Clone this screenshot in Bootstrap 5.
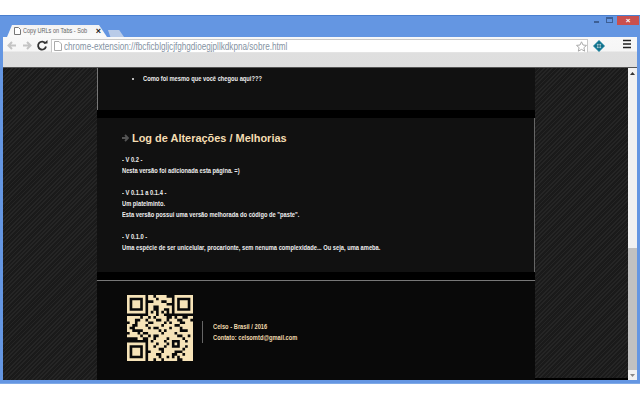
<!DOCTYPE html>
<html lang="en">
<head>
    <meta charset="UTF-8">
    <title>Copy URLs on Tabs - Sobre</title>
    <link href="https://cdn.jsdelivr.net/npm/bootstrap@5.3.0/dist/css/bootstrap.min.css" rel="stylesheet">
    <style>
        html, body { width: 640px; height: 400px; overflow: hidden; background: #fff; }
        body { font-family: "Liberation Sans", Arial, sans-serif; }
        .browser-win { margin-top: 15px; height: 369px; background: #6496e2; border-top: 1px solid #4a7fce; border-bottom: 1px solid #7fa9e6; padding: 0 3px 3px 3px; }
        .tab-strip { height: 21px; flex: none; }
        .tab-shape { width: 100px; height: 12px; margin-left: 4px; padding: 0 6px 0 7px; background: linear-gradient(#f2f2f2, #fafafa); clip-path: polygon(0 100%, 5px 0, 92px 0, 100% 100%); font-size: 7.5px; color: #666; white-space: nowrap; }
        .tab-shape svg { flex: none; }
        .tab-title { margin: 0 -20px 0 2px; flex: none; transform: scaleX(.74); transform-origin: 0 50%; }
        .tab-close { font-size: 9px; font-weight: bold; color: #222; line-height: 1; }
        .new-tab { width: 16px; height: 7px; margin-left: 1px; background: #b9cbe8; clip-path: polygon(0 0, 70% 0, 100% 100%, 15% 100%); }
        .win-btn { height: 9px; margin-right: -2px; }
        .win-close { width: 22px; height: 9px; background: #c9504f; color: #fff; font-size: 8px; font-weight: bold; line-height: 9px; text-align: center; margin-left: 3px; }
        .tool-bar { height: 31px; flex: none; background: linear-gradient(#f8f8f8 0, #f6f6f6 14px, #dfdfdf 15px, #dedede 100%); border-bottom: 1px solid #555; padding: 2px 6px 0 2px; }
        .nav-glyph { width: 14px; height: 13px; flex: none; margin-right: 1px; }
        .addr-bar { width: 537px; height: 14px; margin-left: 1px; background: #fff; border: 1px solid #c8c8c8; border-bottom-color: #e4e4e4; padding: 0 0 0 2px; flex: none; font-size: 10px; color: #8593a3; white-space: nowrap; }
        .addr-icon { margin-right: 2px; }
        .addr-text { transform: scaleX(.815); transform-origin: 0 50%; }
        .ext-icon { margin-left: 4px; }
        .page-view { height: 313px; min-height: 0; }
        .hatch-side { width: 94px; flex: none; background: repeating-linear-gradient(135deg, #252525 0, #252525 1.2px, #1a1a1a 1.2px, #1a1a1a 3px); }
        .page-col { width: 438px; flex: none; font-size: 7px; font-weight: bold; line-height: 11px; color: #efefef; }
        .hatch-right { width: 93px; flex: none; background: repeating-linear-gradient(135deg, #252525 0, #252525 1.2px, #1a1a1a 1.2px, #1a1a1a 3px); border-bottom: 2px solid #000; }
        .panel-top { height: 42px; background: #111; border-left: 1px solid #777; padding: 5px 0 0 38px; }
        .panel-top ul { margin: 0; padding-left: 7px; }
        .squeeze-text { display: inline-block; white-space: nowrap; transform: scaleX(.82); transform-origin: 0 0; }
        .black-band { height: 8px; background: #000; }
        .panel-log { height: 154px; background: #111; border-right: 1px solid #666; padding: 13px 0 0 25px; }
        .log-head { font-size: 10.95px; line-height: 14px; font-weight: bold; color: #f5deb3; margin: 0 0 9px 0; gap: 3px; }
        .log-lines p { margin: 0 0 11px 0; }
        .foot-rule { height: 1px; background: #777; flex: none; }
        .panel-foot { background: #090909; padding: 14px 0 0 30px; flex: 1; }
        .qr-code { width: 66px; height: 66px; flex: none; }
        .foot-info { margin: 26px 0 0 9px; padding-left: 10px; border-left: 1px solid #666; height: 22px; color: #f0d9ae; }
        .scroll-rail { width: 9px; flex: none; background: #f1f1f1; }
        .scroll-gap { height: 170px; }
        .scroll-thumb { flex: 1; background: #c1c1c1; }
        .scroll-end { height: 10px; flex: none; }
    </style>
</head>
<body>
<div class="browser-win d-flex flex-column">
    <div class="tab-strip d-flex align-items-end">
        <div class="tab-shape d-flex align-items-center">
            <svg width="7" height="8" viewBox="0 0 7 8"><path d="M.5.5h4l2 2v5h-6z" fill="#fff" stroke="#777"/></svg>
            <span class="tab-title">Copy URLs on Tabs - Sob</span>
            <span class="tab-close ms-auto">×</span>
        </div>
        <div class="new-tab"></div>
        <div class="win-btn ms-auto align-self-start d-flex align-items-center">
            <svg width="8" height="9" viewBox="0 0 8 9"><rect x="1" y="5" width="5" height="2" fill="#3d5f94"/></svg>
            <svg class="ms-1" width="9" height="9" viewBox="0 0 9 9"><rect x="1.500" y="1.500" width="6" height="5" fill="none" stroke="#3d5f94"/><rect x="1" y="1" width="7" height="2" fill="#3d5f94"/></svg>
            <div class="win-close">×</div>
        </div>
    </div>
    <div class="tool-bar d-flex align-items-start">
        <svg class="nav-glyph" viewBox="0 0 14 13"><path d="M11 6.500H4M7 3 3.500 6.500 7 10" fill="none" stroke="#c4c4c4" stroke-width="2"/></svg>
        <svg class="nav-glyph" viewBox="0 0 14 13"><path d="M3 6.500h7M7 3l3.500 3.500L7 10" fill="none" stroke="#c4c4c4" stroke-width="2"/></svg>
        <svg class="nav-glyph" viewBox="0 0 14 13"><path d="M10.500 4.500A4 4 0 1 0 11 7.500" fill="none" stroke="#333" stroke-width="1.800"/><path d="M8.500 4.500h4v-3.500z" fill="#333"/></svg>
        <div class="addr-bar d-flex align-items-center">
            <svg class="addr-icon" width="8" height="10" viewBox="0 0 8 10"><path d="M.5.5h4.500l2.500 2.500v6.500h-7z" fill="#fff" stroke="#aaa"/></svg>
            <span class="addr-text">chrome-extension://fbcficblgljcjfghgdioegjpllkdkpna/sobre.html</span>
            <svg class="ms-auto" width="11" height="11" viewBox="0 0 11 11"><path d="M5.500.8 7 4l3.500.4-2.600 2.300.8 3.500-3.200-1.800-3.200 1.800.8-3.500L.5 4.400 4 4z" fill="#fff" stroke="#aaa"/></svg>
        </div>
        <svg class="ext-icon" width="14" height="14" viewBox="0 0 14 14"><path d="M7 1l6 6-6 6-6-6z" fill="#1b7f9a"/><circle cx="7" cy="7" r="2.200" fill="#e8f4f6"/><path d="M7 3v8M3 7h8" stroke="#0f5f75"/></svg>
        <svg class="ms-auto" width="8" height="10" viewBox="0 0 8 10"><path d="M0 1.500h8M0 5h8M0 8.500h8" stroke="#222" stroke-width="1.500"/></svg>
    </div>
    <div class="page-view d-flex">
        <div class="hatch-side"></div>
        <div class="page-col d-flex flex-column">
            <div class="panel-top">
                <ul><li><span class="squeeze-text">Como foi mesmo que você chegou aqui???</span></li></ul>
            </div>
            <div class="black-band"></div>
            <div class="panel-log">
                <h2 class="log-head d-flex align-items-center">
                    <svg width="7" height="8" viewBox="0 0 7 8"><path d="M0 4h5M3 1l3 3-3 3" fill="none" stroke="#555" stroke-width="1.800"/></svg>
                    <span>Log de Alterações / Melhorias</span>
                </h2>
                <div class="log-lines squeeze-text">
                    <p>- V 0.2 -<br>Nesta versão foi adicionada esta página. =)</p>
                    <p>- V 0.1.1 a 0.1.4 -<br>Um platelminto.<br>Esta versão possui uma versão melhorada do código de "paste".</p>
                    <p>- V 0.1.0 -<br>Uma espécie de ser unicelular, procarionte, sem nenuma complexidade... Ou seja, uma ameba.</p>
                </div>
            </div>
            <div class="black-band"></div>
            <div class="foot-rule"></div>
            <div class="panel-foot d-flex">
                <svg class="qr-code" id="qrCode" viewBox="0 0 25 25"></svg>
                <div class="foot-info">
                    <span class="squeeze-text">Celso - Brasil / 2016<br>Contato: celsomtd@gmail.com</span>
                </div>
            </div>
        </div>
        <div class="hatch-right"></div>
        <div class="scroll-rail d-flex flex-column">
            <div class="scroll-end d-flex justify-content-center pt-1"><svg width="5" height="3" viewBox="0 0 5 3"><path d="M2.500 0 5 3H0z" fill="#333"/></svg></div>
            <div class="scroll-gap"></div>
            <div class="scroll-thumb"></div>
            <div class="scroll-end d-flex justify-content-center pt-1"><svg width="5" height="3" viewBox="0 0 5 3"><path d="M0 0h5L2.500 3z" fill="#888"/></svg></div>
        </div>
    </div>
</div>
<script>
    // QR modules, one string per row
    const qrRows = [
        '1111111011011110001111111',
        '1000001011101111101000001',
        '1011101000111001101011101',
        '1011101011111110001011101',
        '1011101011001111101011101',
        '1000001011001100101000001',
        '1111111010101010101111111',
        '0000000011101100000000000',
        '1111101101011110010110011',
        '1110011011100110111001110',
        '0110111100111101011100111',
        '1100111011111011110011111',
        '1001111101001111011101111',
        '1100001111110101111100011',
        '0111010011111011110111111',
        '1111101101001111111001101',
        '0000110011011110111110111',
        '0000000010111101100011011',
        '1111111011101110101011111',
        '1000001011011101100011011',
        '1011101011110011111110111',
        '1011101001111011110001111',
        '1011101011100111100110111',
        '1000001011110110101011111',
        '1111111011011011111001111'
    ];
    const qrCode = document.getElementById('qrCode');
    let qrPath = '';
    qrRows.forEach((row, y) => {
        [...row].forEach((cell, x) => {
            if (cell === '1') qrPath += `M${x} ${y}h1v1h-1z`;
        });
    });
    qrCode.innerHTML = `<path d="${qrPath}" fill="#f6e3b8"/>`;
</script>
<script src="https://cdn.jsdelivr.net/npm/bootstrap@5.3.0/dist/js/bootstrap.bundle.min.js"></script>
</body>
</html>
